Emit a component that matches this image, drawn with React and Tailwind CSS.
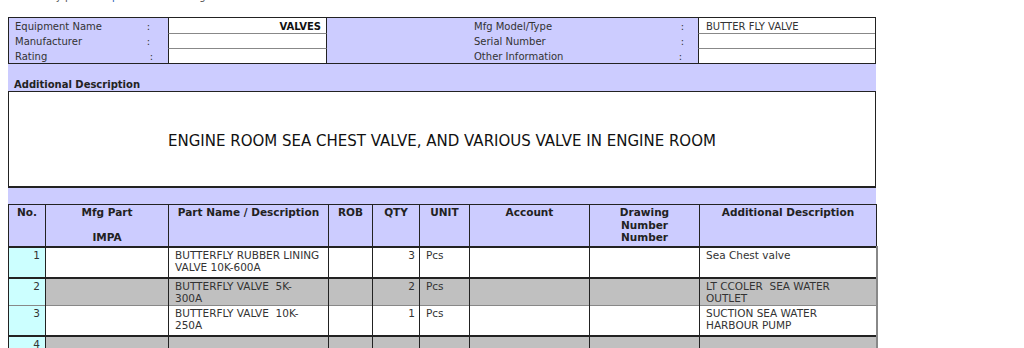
import React from "react";

const cols = [37, 123, 160, 44, 47, 50, 120, 110, 177];

const rows = [
  { no: "1", part: ["BUTTERFLY RUBBER LINING", "VALVE 10K-600A"], qty: "3", unit: "Pcs", add: ["Sea Chest valve"], gray: false, h: "h-[31px]", top: "border-t-2 border-t-[#222]" },
  { no: "2", part: ["BUTTERFLY VALVE  5K-", "300A"], qty: "2", unit: "Pcs", add: ["LT CCOLER  SEA WATER", "OUTLET"], gray: true, h: "h-[26px]", top: "border-t-2 border-t-[#222]" },
  { no: "3", part: ["BUTTERFLY VALVE  10K-", "250A"], qty: "1", unit: "Pcs", add: ["SUCTION SEA WATER", "HARBOUR PUMP"], gray: false, h: "h-[31px]", top: "border-t border-t-[#888]" },
  { no: "4", part: [], qty: "", unit: "", add: [], gray: true, h: "h-[31px]", top: "border-t-2 border-t-[#222]" },
];

function Lines({ items }) {
  return items.map((t, i) => (
    <div key={i} className="whitespace-pre">{t}</div>
  ));
}

export default function App() {
  return (
    <div className="bg-white w-[1024px] h-[348px] overflow-hidden font-['DejaVu_Sans',Verdana,sans-serif] text-[10px] text-[#333]">
      {/* breadcrumb line scrolled mostly out of view */}
      <div className="h-[17px] overflow-hidden">
        <div className="-mt-[9px] pl-[14px] leading-[12px] text-[#555] whitespace-pre">
          Inventory part for <span className="text-[#1a5fb4]">Spare</span> items catalog
        </div>
      </div>

      <div className="ml-[8px] w-[868px]">
        {/* equipment header */}
        <div className="grid grid-cols-[159px_159px_371px_177px] grid-rows-[15px_15px_15px] border border-[#222] bg-[#ccccff] leading-[13px]">
          <div className="flex pt-[2px] pl-[6px] pr-[18px] justify-between"><span>Equipment Name</span><span>:</span></div>
          <div className="bg-white border-x border-[#222] pt-[2px] text-right pr-[5px] font-bold text-[#111]">VALVES</div>
          <div className="flex pt-[2px] pl-[147px] pr-[14px] justify-between"><span>Mfg Model/Type</span><span>:</span></div>
          <div className="bg-white border-l border-[#222] pt-[2px] pl-[7px]">BUTTER FLY VALVE</div>

          <div className="flex pt-[2px] pl-[6px] pr-[18px] justify-between"><span>Manufacturer</span><span>:</span></div>
          <div className="bg-white border-x border-[#222] border-t border-t-[#888]"></div>
          <div className="flex pt-[2px] pl-[147px] pr-[14px] justify-between"><span>Serial Number</span><span>:</span></div>
          <div className="bg-white border-l border-[#222] border-t border-t-[#888]"></div>

          <div className="flex pt-[2px] pl-[6px] pr-[15px] justify-between"><span>Rating</span><span>:</span></div>
          <div className="bg-white border-x border-[#222] border-t border-t-[#888]"></div>
          <div className="flex pt-[2px] pl-[147px] pr-[16px] justify-between"><span>Other Information</span><span>:</span></div>
          <div className="bg-white border-l border-[#222] border-t border-t-[#888]"></div>
        </div>

        {/* additional description block */}
        <div className="h-[27px] bg-[#ccccff] flex items-end pl-[6px] font-bold text-[#222] leading-[12px]">
          Additional Description
        </div>
        <div className="h-[97px] bg-white border border-b-2 border-[#222] flex items-center justify-center pt-[4px] text-[15px] text-[#111]">
          ENGINE ROOM SEA CHEST VALVE, AND VARIOUS VALVE IN ENGINE ROOM
        </div>
        <div className="h-[16px] bg-[#ccccff]"></div>

        {/* parts list */}
        <table className="table-fixed border-collapse w-[868px] text-[10.5px] leading-[12.5px]">
          <colgroup>
            {cols.map((w, i) => (
              <col key={i} style={{ width: w }} />
            ))}
          </colgroup>
          <thead>
            <tr className="h-[42px] bg-[#ccccff] font-bold text-[#222] align-top text-center">
              <th className="border border-[#222] pt-[1px]">No.</th>
              <th className="border border-[#222] pt-[1px]">Mfg Part<div className="h-[12.5px]"></div>IMPA</th>
              <th className="border border-[#222] pt-[1px]">Part Name / Description</th>
              <th className="border border-[#222] pt-[1px]">ROB</th>
              <th className="border border-[#222] pt-[1px]">QTY</th>
              <th className="border border-[#222] pt-[1px]">UNIT</th>
              <th className="border border-[#222] pt-[1px]">Account</th>
              <th className="border border-[#222] pt-[1px]">Drawing<br />Number<br />Number</th>
              <th className="border border-[#222] pt-[1px]">Additional Description</th>
            </tr>
          </thead>
          <tbody>
            {rows.map((r) => {
              const bg = r.gray ? "bg-[#c0c0c0]" : "bg-white";
              const cell = `border-x border-x-[#222] ${r.top} ${bg} align-top`;
              return (
                <tr key={r.no} className={r.h}>
                  <td className={`border-x border-x-[#222] ${r.top} bg-[#ccffff] align-top text-right pr-[5px] pt-[1px]`}>{r.no}</td>
                  <td className={cell}></td>
                  <td className={`${cell} pl-[6px] pt-[1px]`}><Lines items={r.part} /></td>
                  <td className={cell}></td>
                  <td className={`${cell} text-right pr-[4px] pt-[1px]`}>{r.qty}</td>
                  <td className={`${cell} pl-[6px] pt-[1px]`}>{r.unit}</td>
                  <td className={cell}></td>
                  <td className={cell}></td>
                  <td className={`${cell} pl-[6px] pt-[1px] border-r-[#888] border-r-2`}><Lines items={r.add} /></td>
                </tr>
              );
            })}
          </tbody>
        </table>
      </div>
    </div>
  );
}
